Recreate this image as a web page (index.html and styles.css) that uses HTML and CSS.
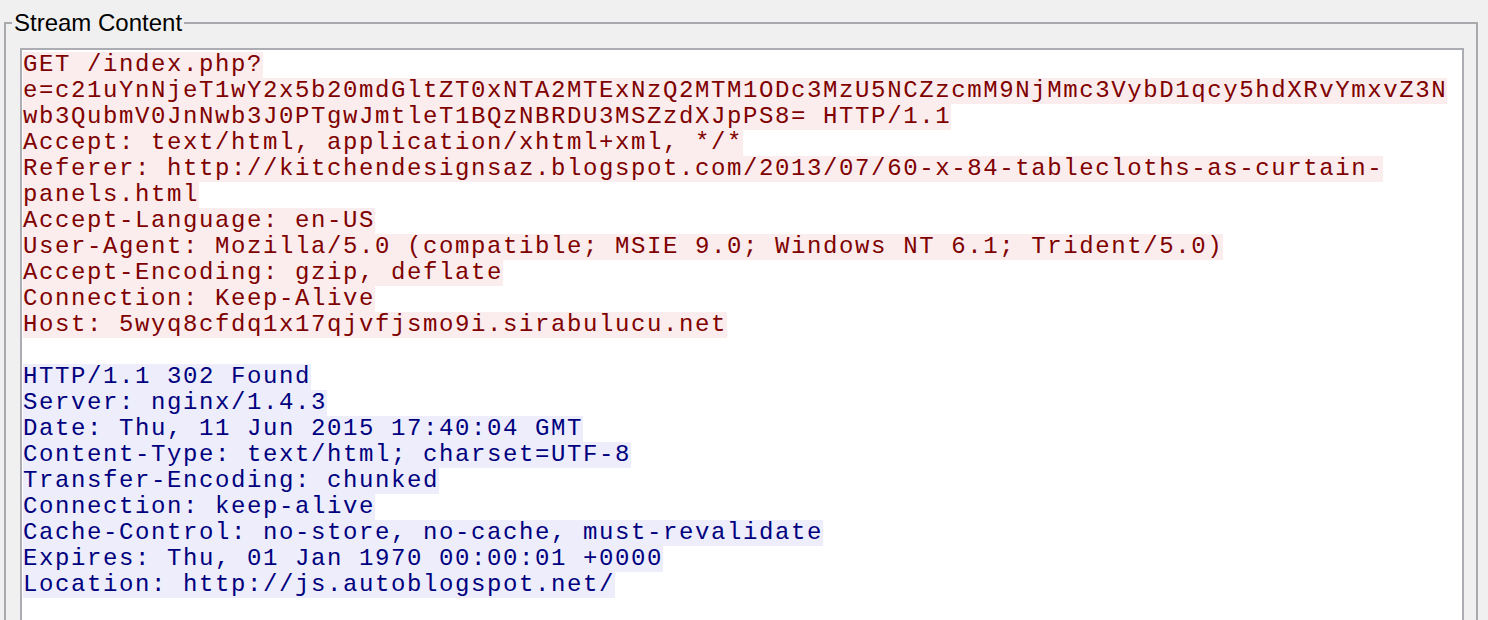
FILE: index.html
```html
<!DOCTYPE html>
<html>
<head>
<meta charset="utf-8">
<link rel="stylesheet" href="styles.css">
</head>
<body>
<div class="group">
  <div class="legend">Stream Content</div>
  <div class="textbox">
    <div class="line c">GET /index.php?</div>
    <div class="line c">e=c21uYnNjeT1wY2x5b20mdGltZT0xNTA2MTExNzQ2MTM1ODc3MzU5NCZzcmM9NjMmc3VybD1qcy5hdXRvYmxvZ3N</div>
    <div class="line c">wb3QubmV0JnNwb3J0PTgwJmtleT1BQzNBRDU3MSZzdXJpPS8= HTTP/1.1</div>
    <div class="line c">Accept: text/html, application/xhtml+xml, */*</div>
    <div class="line c">Referer: http://kitchendesignsaz.blogspot.com/2013/07/60-x-84-tablecloths-as-curtain-</div>
    <div class="line c">panels.html</div>
    <div class="line c">Accept-Language: en-US</div>
    <div class="line c">User-Agent: Mozilla/5.0 (compatible; MSIE 9.0; Windows NT 6.1; Trident/5.0)</div>
    <div class="line c">Accept-Encoding: gzip, deflate</div>
    <div class="line c">Connection: Keep-Alive</div>
    <div class="line c">Host: 5wyq8cfdq1x17qjvfjsmo9i.sirabulucu.net</div>
    <div class="line blank"></div>
    <div class="line s">HTTP/1.1 302 Found</div>
    <div class="line s">Server: nginx/1.4.3</div>
    <div class="line s">Date: Thu, 11 Jun 2015 17:40:04 GMT</div>
    <div class="line s">Content-Type: text/html; charset=UTF-8</div>
    <div class="line s">Transfer-Encoding: chunked</div>
    <div class="line s">Connection: keep-alive</div>
    <div class="line s">Cache-Control: no-store, no-cache, must-revalidate</div>
    <div class="line s">Expires: Thu, 01 Jan 1970 00:00:01 +0000</div>
    <div class="line s">Location: http://js.autoblogspot.net/</div>
  </div>
</div>
</body>
</html>
```

FILE: styles.css
```css
html, body {
  margin: 0;
  padding: 0;
  background: #f0f0f0;
  overflow: hidden;
  height: 620px;
}

.group {
  position: relative;
  margin: 22px 10px 0 4px;
  border: 2px solid #a9a9ad;
  border-bottom: none;
  padding: 24px 12px 0 14px;
  height: 620px;
  box-sizing: border-box;
}

.legend {
  position: absolute;
  top: -15px;
  left: 6px;
  padding: 0 2px;
  background: #f0f0f0;
  font-family: "Liberation Sans", Arial, sans-serif;
  font-size: 24px;
  line-height: 28px;
  color: #000;
}

.textbox {
  background: #fff;
  border: 2px solid #abadb3;
  border-bottom: none;
  height: 600px;
  padding: 2px 1px 0 1px;
  box-sizing: border-box;
  font-family: "Liberation Mono", "Courier New", monospace;
  font-size: 24px;
  letter-spacing: 1.6px;
  line-height: 26px;
}

.line {
  width: fit-content;
  height: 26px;
  white-space: pre;
}

.c {
  color: #7f0000;
  background: #fbeded;
}

.s {
  color: #00007f;
  background: #ededfb;
}
```
